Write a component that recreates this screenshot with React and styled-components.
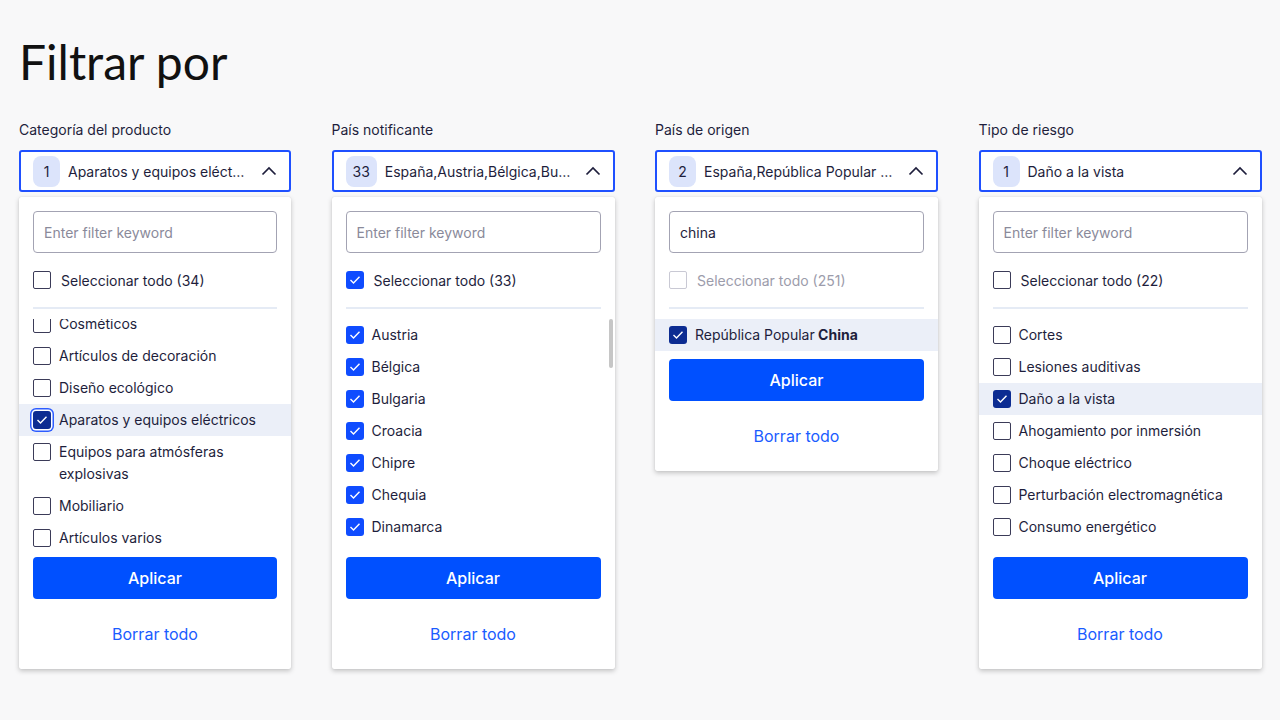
import React, { useLayoutEffect, useRef } from "react";
import styled, { createGlobalStyle, css } from "styled-components";

const GlobalStyle = createGlobalStyle`
  * { box-sizing: border-box; }
  body {
    margin: 0;
    background: #f8f8f9;
    font-family: "Inter", "Liberation Sans", sans-serif;
    color: #1e1e3c;
  }
`;

const Page = styled.main`
  padding: 33px 19px 0;
  min-height: 720px;
`;

const Title = styled.h1`
  margin: 0;
  font-family: "Lato", "Liberation Sans", sans-serif;
  font-weight: 400;
  font-size: 48px;
  line-height: 58px;
  color: #111;
`;

const Filters = styled.div`
  display: grid;
  grid-template-columns: 272px 283px 283px 283px;
  column-gap: 40.5px;
  align-items: start;
  margin-top: 29px;
`;

const Column = styled.section`
  display: flex;
  flex-direction: column;
`;

const Label = styled.div`
  font-size: 14px;
  line-height: 20px;
  margin-bottom: 10px;
  color: #1e1e3c;
`;

const SelectBox = styled.div`
  display: flex;
  align-items: center;
  gap: 8px;
  height: 42px;
  padding: 0 12px;
  background: #fff;
  border: 2px solid #1f50ff;
  border-radius: 3px;
`;

const CountBadge = styled.span`
  flex: none;
  min-width: 27px;
  height: 31px;
  padding: 0 7px;
  display: flex;
  align-items: center;
  justify-content: center;
  border-radius: 8px;
  background: #dce4fb;
  font-size: 14px;
`;

const SelectValue = styled.span`
  flex: 1;
  min-width: 0;
  font-size: 14px;
  white-space: nowrap;
  overflow: hidden;
  text-overflow: ellipsis;
`;

const Chevron = styled.svg`
  flex: none;
  width: 16px;
  height: 10px;
  margin-left: 4px;
`;

const Panel = styled.div`
  margin-top: 5px;
  padding: 14px 0 24px;
  background: #fff;
  border-radius: 2px;
  box-shadow: 0 2px 5px rgba(0, 0, 0, 0.22), 0 0 1px rgba(0, 0, 0, 0.15);
  display: flex;
  flex-direction: column;
`;

const SearchInput = styled.input`
  margin: 0 14px;
  height: 42px;
  padding: 0 10px;
  border: 1.5px solid #a3a3b3;
  border-radius: 4px;
  font: 14px "Inter", "Liberation Sans", sans-serif;
  color: #1e1e3c;
  outline: none;
  &::placeholder { color: #8a8a9a; }
`;

const SelectAll = styled.label`
  display: flex;
  align-items: center;
  gap: 10px;
  height: 26px;
  margin: 14px 14px 0;
  font-size: 14px;
  color: ${(p) => (p.$disabled ? "#9c9cab" : "#1e1e3c")};
`;

const Divider = styled.hr`
  margin: 14px 14px 0;
  border: 0;
  height: 2px;
  background: #e5ebf5;
`;

const ListFrame = styled.div`
  position: relative;
  margin-top: 10px;
`;

/* long lists keep a fixed viewport; short result lists shrink to fit */
const List = styled.ul`
  list-style: none;
  margin: 0;
  padding: 0;
  height: ${(p) => (p.$short ? "auto" : "230px")};
  overflow-y: auto;
  scrollbar-width: none;
`;

/* overlay scrollbar thumb */
const ScrollThumb = styled.span`
  position: absolute;
  top: 0;
  right: 2px;
  width: 4px;
  height: 49px;
  border-radius: 2px;
  background: #c6c6c6;
`;

const Row = styled.li`
  display: flex;
  align-items: flex-start;
  gap: 8px;
  padding: 5px 14px;
  font-size: 14px;
  line-height: 22px;
  background: ${(p) => (p.$active ? "#ebeff8" : "transparent")};
  & > span:first-child { margin-top: 2px; }
`;

const Box = styled.span`
  flex: none;
  width: 18px;
  height: 18px;
  border-radius: 2px;
  display: flex;
  align-items: center;
  justify-content: center;
  background: #fff;
  border: 1.5px solid #3b3b58;
  ${(p) =>
    p.$disabled &&
    css`
      border-color: #c9c9d4;
    `}
  ${(p) =>
    p.$checked &&
    css`
      border: 0;
      border-radius: 3px;
      background: ${p.$dark ? "#0c2c92" : "#0f4cff"};
    `}
  ${(p) =>
    p.$focus &&
    css`
      box-shadow: 0 0 0 1.5px #fff, 0 0 0 3px #2d5cff;
    `}
`;

const ApplyButton = styled.button`
  margin: 8px 14px 0;
  height: 42px;
  border: 0;
  border-radius: 4px;
  background: #0050ff;
  color: #fff;
  font: 500 16px "Inter", "Liberation Sans", sans-serif;
`;

const ClearLink = styled.a`
  margin-top: 24px;
  align-self: center;
  font-size: 16px;
  line-height: 22px;
  color: #1a5cff;
  text-decoration: none;
`;

const Checkbox = ({ checked, dark, focus, disabled }) => (
  <Box $checked={checked} $dark={dark} $focus={focus} $disabled={disabled}>
    {checked && (
      <svg width="12" height="10" viewBox="0 0 12 10">
        <polyline points="1.5,5 4.5,8 10.5,1.8" fill="none" stroke="#fff" strokeWidth="1.4" />
      </svg>
    )}
  </Box>
);

const FilterColumn = ({ filter }) => {
  const listRef = useRef(null);

  useLayoutEffect(() => {
    if (listRef.current) listRef.current.scrollTop = filter.scroll || 0;
  }, [filter.scroll]);

  return (
    <Column>
      <Label>{filter.label}</Label>
      <SelectBox>
        <CountBadge>{filter.count}</CountBadge>
        <SelectValue>{filter.value}</SelectValue>
        <Chevron viewBox="0 0 16 10">
          <polyline points="1.5,8.5 8,2 14.5,8.5" fill="none" stroke="#1e1e3c" strokeWidth="1.7" />
        </Chevron>
      </SelectBox>
      <Panel>
        <SearchInput placeholder="Enter filter keyword" defaultValue={filter.query} />
        <SelectAll $disabled={filter.allDisabled}>
          <Checkbox checked={filter.allChecked} disabled={filter.allDisabled} />
          Seleccionar todo ({filter.total})
        </SelectAll>
        <Divider />
        <ListFrame>
          <List ref={listRef} $short={!!filter.query}>
            {filter.items.map((item) => (
              <Row key={item.name} $active={item.active}>
                <Checkbox checked={item.checked} dark={item.active} focus={item.focus} />
                <span>
                  {item.name}
                  {item.bold && <b> {item.bold}</b>}
                </span>
              </Row>
            ))}
          </List>
          {filter.scrollbar && <ScrollThumb />}
        </ListFrame>
        <ApplyButton>Aplicar</ApplyButton>
        <ClearLink href="#">Borrar todo</ClearLink>
      </Panel>
    </Column>
  );
};

const countries = [
  "Austria", "Bélgica", "Bulgaria", "Croacia", "Chipre", "Chequia", "Dinamarca",
  "Estonia", "Finlandia", "Francia", "Alemania", "Grecia", "Hungría", "Islandia",
  "Irlanda", "Italia", "Letonia", "Liechtenstein", "Lituania", "Luxemburgo",
  "Malta", "Países Bajos", "Noruega", "Polonia", "Portugal", "Rumanía",
  "Eslovaquia", "Eslovenia", "Suecia", "Suiza", "Turquía", "Reino Unido",
];

const filters = [
  {
    label: "Categoría del producto",
    count: 1,
    value: "Aparatos y equipos eléctricos",
    total: 34,
    scroll: 107,
    items: [
      { name: "Alimentos" },
      { name: "Artículos de puericultura" },
      { name: "Productos químicos" },
      { name: "Cosméticos" },
      { name: "Artículos de decoración" },
      { name: "Diseño ecológico" },
      { name: "Aparatos y equipos eléctricos", checked: true, active: true, focus: true },
      { name: "Equipos para atmósferas explosivas" },
      { name: "Mobiliario" },
      { name: "Artículos varios" },
      { name: "Juguetes" },
      { name: "Vehículos de motor" },
    ],
  },
  {
    label: "País notificante",
    count: 33,
    value: "España,Austria,Bélgica,Bulgaria,Croacia,Chipre",
    total: 33,
    allChecked: true,
    scrollbar: true,
    items: countries.map((name) => ({ name, checked: true })),
  },
  {
    label: "País de origen",
    count: 2,
    value: "España,República Popular China",
    total: 251,
    query: "china",
    allDisabled: true,
    items: [{ name: "República Popular", bold: "China", checked: true, active: true }],
  },
  {
    label: "Tipo de riesgo",
    count: 1,
    value: "Daño a la vista",
    total: 22,
    items: [
      { name: "Cortes" },
      { name: "Lesiones auditivas" },
      { name: "Daño a la vista", checked: true, active: true },
      { name: "Ahogamiento por inmersión" },
      { name: "Choque eléctrico" },
      { name: "Perturbación electromagnética" },
      { name: "Consumo energético" },
    ],
  },
];

export default function App() {
  return (
    <>
      <GlobalStyle />
      <Page>
        <Title>Filtrar por</Title>
        <Filters>
          {filters.map((f) => (
            <FilterColumn key={f.label} filter={f} />
          ))}
        </Filters>
      </Page>
    </>
  );
}
